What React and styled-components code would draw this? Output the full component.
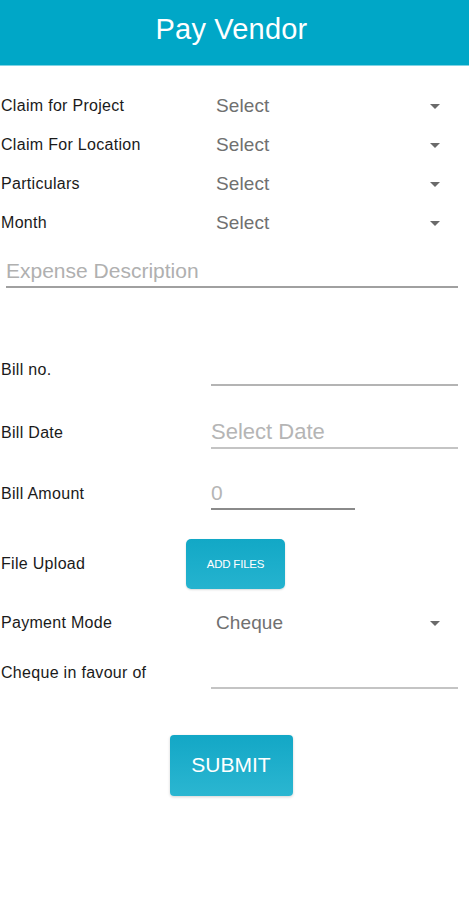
import React from "react";
import styled, { createGlobalStyle } from "styled-components";

const Global = createGlobalStyle`
  html, body { margin: 0; padding: 0; background: #fff; }
  body { font-family: "Liberation Sans", Arial, Helvetica, sans-serif; }
  * { box-sizing: border-box; }
`;

const Page = styled.div`
  width: 469px;
  min-height: 900px;
  background: #fff;
  display: flex;
  flex-direction: column;
  font-family: "Liberation Sans", Arial, Helvetica, sans-serif;
`;

const Header = styled.header`
  height: 66px;
  background: #00a7c7;
  border-bottom: 1px solid #7fd3e4;
  display: flex;
  align-items: center;
  justify-content: center;
  color: #fff;
  font-size: 29px;
  font-weight: 400;
  letter-spacing: 0.2px;
  padding: 0 6px 6px 0;
`;

const SelectList = styled.div`
  display: flex;
  flex-direction: column;
  padding-top: 20px;
`;

const Row = styled.div`
  display: flex;
  align-items: center;
  height: ${(p) => p.$h || 39}px;
  margin-top: ${(p) => p.$mt || 0}px;
  padding-left: 1px;
`;

const Label = styled.div`
  width: ${(p) => p.$w || 215}px;
  flex-shrink: 0;
  font-size: 16px;
  letter-spacing: 0.3px;
  color: #1a1a1a;
`;

const SelectBox = styled.div`
  flex: 1;
  display: flex;
  align-items: center;
  justify-content: space-between;
  padding-right: 29px;
  font-size: 19px;
  letter-spacing: 0.1px;
  color: #707070;
`;

const Caret = styled.span`
  width: 0;
  height: 0;
  border-left: 5px solid transparent;
  border-right: 5px solid transparent;
  border-top: 5px solid #6a6a6a;
  margin-top: 2px;
`;

const Expense = styled.div`
  margin: 14px 11px 0 6px;
  height: 32px;
  border-bottom: 2px solid #a0a0a0;
  font-size: 21px;
  line-height: 30px;
  color: #b0b0b0;
`;

const Field = styled.div`
  width: ${(p) => p.$w || 247}px;
  height: 32px;
  border-bottom: 2px solid ${(p) => p.$line || "#c4c4c4"};
  font-size: ${(p) => p.$fs || 22}px;
  line-height: 30px;
  color: #b5b5b5;
`;

const AddFiles = styled.button`
  margin-left: -25px;
  width: 99px;
  height: 50px;
  border: none;
  border-radius: 5px;
  background: linear-gradient(#12a8c6, #25b3cf);
  color: #fff;
  font-family: inherit;
  font-size: 11.5px;
  letter-spacing: -0.2px;
  box-shadow: 0 1px 2px rgba(0, 0, 0, 0.15);
  padding: 0;
`;

const SubmitWrap = styled.div`
  display: flex;
  justify-content: center;
  padding-right: 7px;
  margin-top: 46px;
`;

const Submit = styled.button`
  width: 123px;
  height: 61px;
  border: none;
  border-radius: 4px;
  background: linear-gradient(#13a7c6, #2bb6d1);
  color: #fff;
  font-family: inherit;
  font-size: 21px;
  box-shadow: 0 1px 3px rgba(0, 0, 0, 0.18);
  padding: 0 0 2px;
`;

const selects = [
  "Claim for Project",
  "Claim For Location",
  "Particulars",
  "Month",
];

export default function App() {
  return (
    <Page>
      <Global />
      <Header>Pay Vendor</Header>
      <SelectList>
        {selects.map((l) => (
          <Row key={l}>
            <Label>{l}</Label>
            <SelectBox>
              <span>Select</span>
              <Caret />
            </SelectBox>
          </Row>
        ))}
      </SelectList>
      <Expense>Expense Description</Expense>

      <Row $h={32} $mt={66}>
        <Label $w={210}>Bill no.</Label>
        <Field $line="#b4b4b4" />
      </Row>
      <Row $h={32} $mt={31}>
        <Label $w={210}>Bill Date</Label>
        <Field>Select Date</Field>
      </Row>
      <Row $h={32} $mt={29}>
        <Label $w={210}>Bill Amount</Label>
        <Field $w={144} $fs={21} $line="#8a8a8a">0</Field>
      </Row>
      <Row $h={50} $mt={29}>
        <Label $w={210}>File Upload</Label>
        <AddFiles>ADD FILES</AddFiles>
      </Row>
      <Row $mt={14}>
        <Label>Payment Mode</Label>
        <SelectBox>
          <span>Cheque</span>
          <Caret />
        </SelectBox>
      </Row>
      <Row $h={32} $mt={15}>
        <Label $w={210}>Cheque in favour of</Label>
        <Field />
      </Row>
      <SubmitWrap>
        <Submit>SUBMIT</Submit>
      </SubmitWrap>
    </Page>
  );
}
